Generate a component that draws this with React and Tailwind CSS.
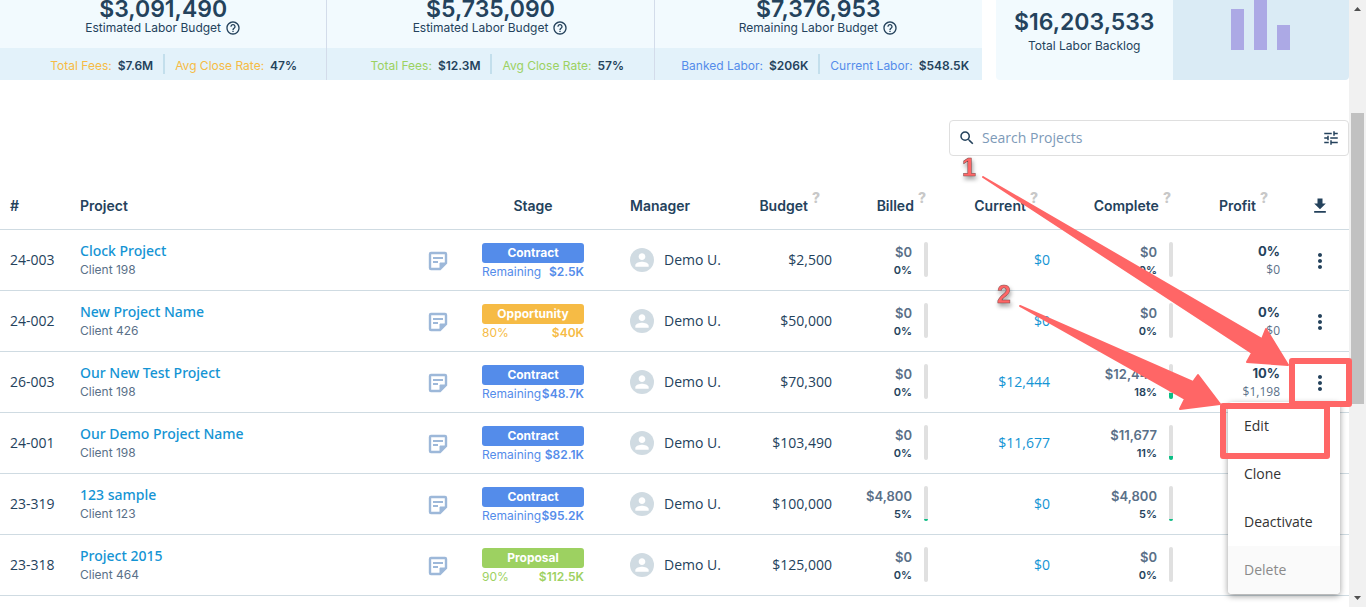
import React, { useState } from 'react';
import { MdHelpOutline, MdSearch, MdTune, MdMoreVert, MdPerson, MdFileDownload } from 'react-icons/md';

const KPIS = [
    { amount: '$3,091,490', label: 'Estimated Labor Budget', color: 'text-[#f6bb45]', stats: [['Total Fees:', '$7.6M'], ['Avg Close Rate:', '47%']] },
    { amount: '$5,735,090', label: 'Estimated Labor Budget', color: 'text-[#9bd161]', stats: [['Total Fees:', '$12.3M'], ['Avg Close Rate:', '57%']] },
    { amount: '$7,376,953', label: 'Remaining Labor Budget', color: 'text-[#548cea]', stats: [['Banked Labor:', '$206K'], ['Current Labor:', '$548.5K']] },
];

const STAGES = {
    Contract: { bg: 'bg-[#548cea]', text: 'text-[#548cea]' },
    Opportunity: { bg: 'bg-[#f6bb45]', text: 'text-[#f6bb45]' },
    Proposal: { bg: 'bg-[#9dd161]', text: 'text-[#9dd161]' },
};

const PROJECTS = [
    { id: '24-003', name: 'Clock Project', client: 'Client 198', stage: 'Contract', note: 'Remaining', value: '$2.5K', budget: '$2,500', billed: '$0', billedPct: 0, current: '$0', complete: '$0', completePct: 0, profitPct: '0%', profit: '$0' },
    { id: '24-002', name: 'New Project Name', client: 'Client 426', stage: 'Opportunity', note: '80%', value: '$40K', budget: '$50,000', billed: '$0', billedPct: 0, current: '$0', complete: '$0', completePct: 0, profitPct: '0%', profit: '$0' },
    { id: '26-003', name: 'Our New Test Project', client: 'Client 198', stage: 'Contract', note: 'Remaining', value: '$48.7K', budget: '$70,300', billed: '$0', billedPct: 0, current: '$12,444', complete: '$12,444', completePct: 18, profitPct: '10%', profit: '$1,198' },
    { id: '24-001', name: 'Our Demo Project Name', client: 'Client 198', stage: 'Contract', note: 'Remaining', value: '$82.1K', budget: '$103,490', billed: '$0', billedPct: 0, current: '$11,677', complete: '$11,677', completePct: 11, profitPct: '', profit: '' },
    { id: '23-319', name: '123 sample', client: 'Client 123', stage: 'Contract', note: 'Remaining', value: '$95.2K', budget: '$100,000', billed: '$4,800', billedPct: 5, current: '$0', complete: '$4,800', completePct: 5, profitPct: '', profit: '' },
    { id: '23-318', name: 'Project 2015', client: 'Client 464', stage: 'Proposal', note: '90%', value: '$112.5K', budget: '$125,000', billed: '$0', billedPct: 0, current: '$0', complete: '$0', completePct: 0, profitPct: '', profit: '' },
];

function KpiCard({ amount, label, color, stats }) {
    return (
        <div className="border-r border-[#d3dcea] last:border-r-0">
            <div className="h-12 flex flex-col items-center bg-[#f2fafe]">
                <div className="text-[23px] leading-[18px] font-semibold">{amount}</div>
                <div className="flex items-center gap-1 text-[12px] leading-5">
                    {label}
                    <MdHelpOutline className="w-4 h-4" />
                </div>
            </div>
            <div className="h-8 grid grid-cols-2 items-center bg-[#e3f2fa] text-[12px]">
                {stats.map(([name, value], i) => (
                    <div key={name} className={`flex gap-1.5 pt-1 leading-4 ${i ? 'pl-2.5 border-l-2 border-[#c3dfec]' : 'pr-2.5 justify-end'}`}>
                        <span className={color}>{name}</span>
                        <span className="font-semibold">{value}</span>
                    </div>
                ))}
            </div>
        </div>
    );
}

function NoteIcon() {
    return (
        <svg className="w-5 h-5" viewBox="0 0 20 20" fill="none">
            <path d="M3 2h14a1 1 0 0 1 1 1v9L12 18H3a1 1 0 0 1-1-1V3a1 1 0 0 1 1-1z" stroke="#9db8d9" strokeWidth="2.4" />
            <path d="M12 18v-6h6z" fill="#9db8d9" stroke="#9db8d9" />
            <path d="M5 7h10M5 11h5" stroke="#9db8d9" strokeWidth="2" />
        </svg>
    );
}

function HeadCell({ children, help, className }) {
    return (
        <th scope="col" className={`h-[49px] pt-0.5 font-semibold ${className}`}>
            {children}
            {help && <span className="relative -top-2 ml-1 text-[#c8c8c8] font-extrabold">?</span>}
        </th>
    );
}

// Amount and percent with the thin vertical progress bar beside them
function ProgressCell({ amount, percent }) {
    return (
        <td className="pr-2.5">
            <div className="flex items-center justify-end gap-3">
                <div className="text-right font-[Inter,sans-serif]">
                    <div className="text-[13px] leading-5 font-semibold text-[#5a7088]">{amount}</div>
                    <div className="text-[11px] leading-4 font-semibold">{percent}%</div>
                </div>
                <div className="w-1 h-[35px] flex flex-col justify-end rounded-sm overflow-hidden bg-[#e0e0e0]">
                    <div className="bg-[#0abf85]" style={{ height: `${percent}%` }}></div>
                </div>
            </div>
        </td>
    );
}

function RowMenu() {
    return (
        <div className="absolute z-10 right-[9px] top-[50px] w-28 rounded-sm overflow-hidden bg-white text-left text-[14px] text-[#333] shadow-[0_2px_6px_rgba(0,0,0,0.4)]">
            <button className="block w-full h-12 px-4 text-left">Edit</button>
            <button className="block w-full h-12 px-4 text-left">Clone</button>
            <button className="block w-full h-12 px-4 text-left">Deactivate</button>
            <button disabled className="block w-full h-12 px-4 text-left bg-[#fafafa] text-[#8a8a8a]">Delete</button>
        </div>
    );
}

// Numbered callouts that point at the row menu and its first entry
function Callouts() {
    return (
        <svg className="absolute z-20 right-0 top-[140px] pointer-events-none" width="440" height="330" viewBox="926 140 440 330" fill="#ff6666">
            <g stroke="#ff6666" strokeWidth="2" strokeLinejoin="round">
                <path d="M983 177L1262 339L1266 329L1288 365L1247 362L1252 353z" />
                <path d="M1020 306L1193 382L1198 375L1220 404L1180 409L1185 399z" />
            </g>
            <g fill="none" stroke="#ff6666" strokeWidth="6" strokeLinejoin="round">
                <rect x="1292" y="361" width="57" height="43" />
                <rect x="1223" y="406" width="104" height="50" />
            </g>
            <g className="font-['Liberation_Sans',sans-serif] text-[25px] font-bold drop-shadow-[1px_3px_2px_rgba(0,0,0,0.4)]" stroke="#7a4a4a" strokeWidth="0.5">
                <text x="962" y="176">1</text>
                <text x="997" y="303">2</text>
            </g>
        </svg>
    );
}

export default function App() {
    const [openRow, setOpenRow] = useState('26-003');

    return (
        <div className="relative flex h-screen overflow-hidden bg-white text-[#24425c] font-['Open_Sans',sans-serif]">

            <main className="flex-1 min-w-0 overflow-hidden">

                {/* KPI strip */}
                <section className="flex gap-3.5 font-[Inter,sans-serif]">
                    <div className="flex-1 grid grid-cols-3 rounded-b-sm">
                        {KPIS.map((kpi) => <KpiCard key={kpi.amount} {...kpi} />)}
                    </div>
                    <div className="w-[353px] grid grid-cols-2 rounded-b-sm overflow-hidden">
                        <div className="flex flex-col items-center pt-2 bg-[#f2fafe]">
                            <div className="text-[23px] leading-7 font-semibold">$16,203,533</div>
                            <div className="text-[12px] leading-5">Total Labor Backlog</div>
                        </div>
                        <div className="h-20 flex items-end justify-center gap-2.5 pb-[30px] bg-[#daebf5] overflow-hidden">
                            <span className="w-[13px] h-[41px] bg-[#aca9e5]"></span>
                            <span className="w-[13px] h-[58px] bg-[#aca9e5]"></span>
                            <span className="w-[13px] h-[25px] bg-[#aca9e5]"></span>
                        </div>
                    </div>
                </section>

                {/* Search */}
                <div className="mt-10 flex justify-end">
                    <label className="w-[400px] h-9 flex items-center gap-1.5 px-2 rounded border border-[#dfdfdf]">
                        <MdSearch className="w-[18px] h-[18px] shrink-0" />
                        <input type="text" aria-label="Search Projects" placeholder="Search Projects" className="flex-1 min-w-0 text-[14px] leading-5 outline-none placeholder:text-[#7d9ab8]" />
                        <MdTune className="w-[18px] h-[18px] shrink-0" />
                    </label>
                </div>

                {/* Projects */}
                <table className="mt-6 w-full table-fixed text-[14px]">
                    <colgroup>
                        <col className="w-[70px]" />
                        <col />
                        <col className="w-[40px]" />
                        <col className="w-[150px]" />
                        <col className="w-[134px]" />
                        <col className="w-[100px]" />
                        <col className="w-[96px]" />
                        <col className="w-[122px]" />
                        <col className="w-[123px]" />
                        <col className="w-[107px]" />
                        <col className="w-[59px]" />
                    </colgroup>
                    <thead>
                        <tr className="border-b border-[#cfdbe2] text-[14px] font-[Inter,sans-serif]">
                            <HeadCell className="pl-2.5 text-left">#</HeadCell>
                            <HeadCell className="pl-2.5 text-left">Project</HeadCell>
                            <td></td>
                            <HeadCell className="text-center">Stage</HeadCell>
                            <HeadCell className="pl-[22px] text-left">Manager</HeadCell>
                            <HeadCell help className="pr-[22px] text-right">Budget</HeadCell>
                            <HeadCell help className="pr-3 text-right">Billed</HeadCell>
                            <HeadCell help className="pr-[22px] text-right">Current</HeadCell>
                            <HeadCell help className="pr-3 text-right">Complete</HeadCell>
                            <HeadCell help className="pr-[22px] text-right">Profit</HeadCell>
                            <td className="pt-1">
                                <button aria-label="Download" className="block mx-auto"><MdFileDownload className="w-5 h-5" /></button>
                            </td>
                        </tr>
                    </thead>
                    <tbody>
                        {PROJECTS.map((p) => (
                            <tr key={p.id} className="h-[61px] border-b border-[#cfdbe2]">
                                <td className="pl-2.5">{p.id}</td>
                                <td className="pl-2.5">
                                    <a href="#" className="block leading-5 font-medium text-[#1494d4] font-['Noto_Sans',sans-serif]">{p.name}</a>
                                    <div className="text-[12px] leading-[18px] text-[#5a7088] font-[Inter,sans-serif]">{p.client}</div>
                                </td>
                                <td className="pt-0.5">
                                    <button aria-label="Notes" className="block mx-auto"><NoteIcon /></button>
                                </td>
                                <td className="px-6 pt-1 font-[Inter,sans-serif]">
                                    <div className={`h-5 rounded-[3px] text-center text-[12px] leading-5 font-bold text-white ${STAGES[p.stage].bg}`}>{p.stage}</div>
                                    <div className={`flex justify-between text-[12px] leading-[18px] ${STAGES[p.stage].text}`}>
                                        <span>{p.note}</span>
                                        <span className="font-semibold">{p.value}</span>
                                    </div>
                                </td>
                                <td className="pl-[22px]">
                                    <div className="flex items-center gap-2.5">
                                        <span className="w-6 h-6 flex items-center justify-center rounded-full bg-[#d0dbe2] text-white">
                                            <MdPerson className="w-5 h-5" />
                                        </span>
                                        Demo U.
                                    </div>
                                </td>
                                <td className="pr-2.5 text-right">{p.budget}</td>
                                <ProgressCell amount={p.billed} percent={p.billedPct} />
                                <td className="pr-2.5 text-right text-[#1494d4] font-medium">{p.current}</td>
                                <ProgressCell amount={p.complete} percent={p.completePct} />
                                <td className="pr-2.5 text-right">
                                    <div className="text-[13px] leading-5 font-bold font-[Inter,sans-serif]">{p.profitPct}</div>
                                    <div className="text-[12px] leading-[18px] text-[#5a7088]">{p.profit}</div>
                                </td>
                                <td className="relative pt-0.5">
                                    <button aria-label="Project actions" className="block mx-auto" onClick={() => setOpenRow(openRow === p.id ? null : p.id)}>
                                        <MdMoreVert className="w-6 h-6" />
                                    </button>
                                    {openRow === p.id && <RowMenu />}
                                </td>
                            </tr>
                        ))}
                    </tbody>
                </table>
            </main>

            {/* Page scrollbar */}
            <div className="w-[17px] shrink-0 flex flex-col items-center bg-[#f1f1f1]">
                <svg className="w-[17px] h-[17px]" viewBox="0 0 17 17" fill="#505050"><path d="M5 11l3.500-4 3.500 4z" /></svg>
                <div className="w-[13px] flex-1 pt-24">
                    <div className="h-[291px] bg-[#c1c1c1]"></div>
                </div>
                <svg className="w-[17px] h-[17px]" viewBox="0 0 17 17" fill="#505050"><path d="M5 6l3.500 4L12 6z" /></svg>
            </div>

            <Callouts />
        </div>
    );
}
